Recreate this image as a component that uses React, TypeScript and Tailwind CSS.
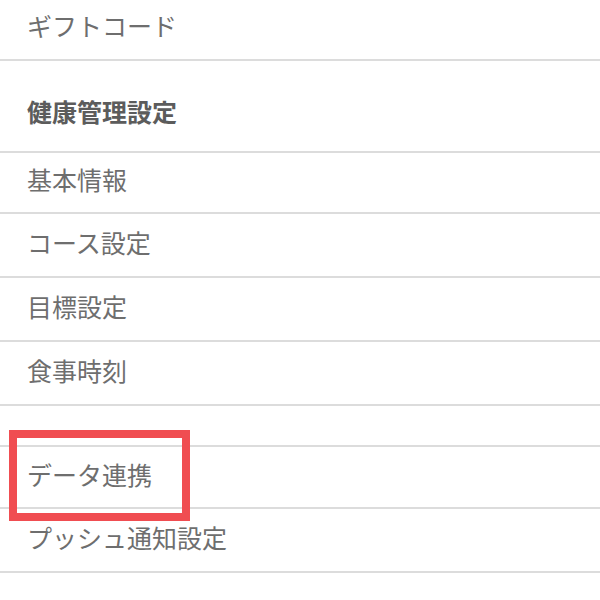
const font = {
  fontFamily: '"Noto Sans CJK JP", "Noto Sans", sans-serif',
};

type Row = {
  label: string;
  h: string;
  pad?: string;
  bold?: boolean;
};

const rows: Row[] = [
  { label: "ギフトコード", h: "h-[61px]", pad: "pb-[9px]" },
  { label: "健康管理設定", h: "h-[92px]", pad: "pt-[12px] pb-[2px]", bold: true },
  { label: "基本情報", h: "h-[61px]", pad: "pb-[6px]" },
  { label: "コース設定", h: "h-[64px]", pad: "pb-[6px]" },
  { label: "目標設定", h: "h-[64px]", pad: "pb-[6px]" },
  { label: "食事時刻", h: "h-[64px]", pad: "pb-[6px]" },
  { label: "", h: "h-[41px]" },
  { label: "データ連携", h: "h-[62px]", pad: "pb-[6px]" },
  { label: "プッシュ通知設定", h: "h-[64px]", pad: "pb-[6px]" },
];

export default function App() {
  return (
    <div className="relative w-[600px] h-[600px] overflow-hidden bg-white" style={font}>
      <ul className="flex flex-col">
        {rows.map((row, i) => (
          <li
            key={i}
            className={`box-border flex items-center border-b-2 border-[#dcdcdc] pl-[27px] ${row.h} ${row.pad ?? ""}`}
          >
            <span
              className={
                row.bold
                  ? "text-[25px] leading-none font-bold text-[#5c5c5c]"
                  : "text-[25px] leading-none text-[#6e6e6e]"
              }
            >
              {row.label}
            </span>
          </li>
        ))}
      </ul>

      {/* highlight marker */}
      <div className="absolute left-[9px] top-[430px] w-[181px] h-[91px] border-[8px] border-[#f04d51]" />
    </div>
  );
}
